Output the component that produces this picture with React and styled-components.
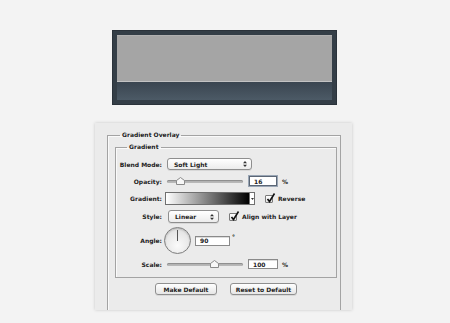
import React from "react";
import styled, { createGlobalStyle } from "styled-components";

const GlobalStyle = createGlobalStyle`
  body {
    margin: 0;
    background: #f3f3f3;
    font-family: "DejaVu Sans", sans-serif;
  }
`;

const Page = styled.div`
  padding-top: 30px;
  height: 323px;
  box-sizing: border-box;
`;

const Preview = styled.div`
  margin-left: 112px;
  width: 225px;
  height: 75px;
  box-sizing: border-box;
  padding: 5px 5px 5px 5px;
  background: #343e47;
  box-shadow: inset 0 0 0 1px #2a323a;
  display: flex;
  flex-direction: column;
`;

const Screen = styled.div`
  height: 47px;
  background: #a5a5a5;
  border-top: 1px solid #b0b0b0;
  border-bottom: 1px solid #c3c3c3;
  box-sizing: border-box;
`;

const Band = styled.div`
  flex: 1;
  background: linear-gradient(#3a4550, #4c5a66);
`;

const Panel = styled.div`
  margin: 18px 0 0 95px;
  width: 257px;
  height: 187px;
  box-sizing: border-box;
  padding: 7px 11px 0 12px;
  background: #ebebeb;
  box-shadow: 0 0 3px rgba(0, 0, 0, 0.18);
  overflow: hidden;
`;

const Group = styled.fieldset`
  margin: 0;
  padding: ${(p) => p.$p || "0"};
  border: 1px solid #a3a3a3;
  border-bottom: ${(p) => (p.$open ? "none" : "1px solid #a3a3a3")};
  box-shadow: 1px 1px 0 #fafafa inset;
  min-width: 0;
  ${(p) => p.$open && "height: 200px;"}
`;

const Legend = styled.legend`
  margin-left: ${(p) => p.$ml || 10}px;
  padding: 0 2px;
  font-size: 6px;
  line-height: 10px;
  font-weight: bold;
  color: #1a1a1a;
`;

const Rows = styled.div`
  display: flex;
  flex-direction: column;
`;

const Row = styled.div`
  display: flex;
  align-items: center;
  height: ${(p) => p.$h}px;
  margin-top: ${(p) => p.$mt || 0}px;
`;

const Label = styled.span`
  width: 46px;
  margin-right: ${(p) => p.$gap ?? 4}px;
  text-align: right;
  font-size: 6px;
  font-weight: bold;
  color: #222;
  flex-shrink: 0;
`;

const Text = styled.span`
  font-size: 6px;
  font-weight: bold;
  color: #222;
  margin-left: ${(p) => p.$ml || 0}px;
  align-self: ${(p) => (p.$top ? "flex-start" : "center")};
  margin-top: ${(p) => p.$top || 0}px;
`;

const Select = styled.div`
  width: ${(p) => p.$w}px;
  height: ${(p) => p.$h}px;
  margin-left: ${(p) => p.$ml || 0}px;
  box-sizing: border-box;
  border: 1px solid #8e8e8e;
  border-radius: 3px;
  background: linear-gradient(#ffffff, #ececec);
  box-shadow: 0 1px 0 rgba(0, 0, 0, 0.08);
  display: flex;
  align-items: center;
  justify-content: space-between;
  padding: 0 4px 0 6px;
  font-size: 6px;
  font-weight: bold;
  color: #222;
`;

const Slider = styled.div`
  position: relative;
  width: 76px;
  height: 3px;
  margin-left: ${(p) => p.$ml || 0}px;
  border-radius: 2px;
  background: #b8b8b8;
  box-shadow: inset 0 1px 1px rgba(0, 0, 0, 0.25);
`;

const Thumb = styled.svg`
  position: absolute;
  top: -3px;
`;

const Field = styled.div`
  width: ${(p) => p.$w}px;
  height: ${(p) => p.$h}px;
  margin-left: ${(p) => p.$ml || 0}px;
  box-sizing: border-box;
  background: #fff;
  border: 1px solid ${(p) => (p.$focus ? "#5b6675" : "#8a8a8a")};
  box-shadow: ${(p) => (p.$focus ? "0 0 0 1px #9aa6b5" : "inset 0 1px 0 #ddd")};
  font-size: 6px;
  font-weight: bold;
  color: #222;
  display: flex;
  align-items: center;
  padding-left: 4px;
`;

const GradientBar = styled.div`
  display: flex;
  height: 13px;
  border: 1px solid #6f6f6f;
  box-sizing: border-box;
`;

const Ramp = styled.div`
  width: 83px;
  background: linear-gradient(to right, #ffffff, #000000);
`;

const DropTab = styled.div`
  width: 4px;
  background: #fff;
  border-left: 1px solid #6f6f6f;
  display: flex;
  align-items: center;
  justify-content: center;
`;

const Check = styled.div`
  position: relative;
  width: 8px;
  height: 8px;
  margin-left: ${(p) => p.$ml}px;
  box-sizing: border-box;
  border: 1px solid #7a7a7a;
  border-radius: 1px;
  background: linear-gradient(#fff, #e4e4e4);
`;

const Tick = styled.svg`
  position: absolute;
  left: 0;
  top: -3px;
`;

const Dial = styled.div`
  position: relative;
  width: 27px;
  height: 27px;
  margin-left: -2px;
  box-sizing: border-box;
  border-radius: 50%;
  border: 1px solid #7e7e7e;
  background: radial-gradient(circle at 50% 70%, #fafafa, #dadada);
  box-shadow: inset 0 1px 2px rgba(0, 0, 0, 0.2);
`;

const Needle = styled.div`
  position: absolute;
  left: 12px;
  top: 2px;
  width: 1px;
  height: 11px;
  background: #555;
`;

const Buttons = styled.div`
  display: flex;
  justify-content: center;
  gap: 13px;
  margin-top: 5px;
`;

const Button = styled.div`
  width: ${(p) => p.$w}px;
  height: 12px;
  box-sizing: border-box;
  border: 1px solid #8f8f8f;
  border-radius: 3px;
  background: linear-gradient(#ffffff, #e6e6e6);
  box-shadow: 0 1px 0 rgba(0, 0, 0, 0.08);
  font-size: 6px;
  font-weight: bold;
  color: #222;
  display: flex;
  align-items: center;
  justify-content: center;
`;

const Arrows = () => (
  <svg width="4" height="6" viewBox="0 0 4 6">
    <path d="M0 2.3 L2 0 L4 2.3 Z M0 3.7 L2 6 L4 3.7 Z" fill="#333" />
  </svg>
);

const ThumbShape = ({ left }) => (
  <Thumb width="9" height="8" viewBox="0 0 9 8" style={{ left }}>
    <path
      d="M4.5 0.5 L8.5 3.5 L8.5 7.5 L0.5 7.5 L0.5 3.5 Z"
      fill="#f7f7f7"
      stroke="#8a8a8a"
      strokeWidth="1"
    />
  </Thumb>
);

const CheckBox = ({ ml }) => (
  <Check $ml={ml}>
    <Tick width="10" height="10" viewBox="0 0 10 10">
      <path
        d="M1.5 6 L3.5 8.5 L8.5 0.5"
        fill="none"
        stroke="#111"
        strokeWidth="1.6"
      />
    </Tick>
  </Check>
);

export default function App() {
  return (
    <Page>
      <GlobalStyle />
      <Preview>
        <Screen />
        <Band />
      </Preview>
      <Panel>
        <Group $open $p="2px 3px 0 7px">
          <Legend $ml={5}>Gradient Overlay</Legend>
          <Group $p="0 0 8px 0">
            <Legend $ml={11}>Gradient</Legend>
            <Rows>
              <Row $h={12} $mt={6}>
                <Label>Blend Mode:</Label>
                <Select $w={85} $h={12} $ml={1}>
                  Soft Light
                  <Arrows />
                </Select>
              </Row>
              <Row $h={10} $mt={6}>
                <Label>Opacity:</Label>
                <Slider $ml={1}>
                  <ThumbShape left={9} />
                </Slider>
                <Field $w={28} $h={10} $ml={6} $focus>
                  16
                </Field>
                <Text $ml={5}>%</Text>
              </Row>
              <Row $h={13} $mt={6}>
                <Label $gap={3}>Gradient:</Label>
                <GradientBar>
                  <Ramp />
                  <DropTab>
                    <svg width="3" height="2" viewBox="0 0 3 2">
                      <path d="M0 0 L3 0 L1.5 2 Z" fill="#333" />
                    </svg>
                  </DropTab>
                </GradientBar>
                <CheckBox ml={10} />
                <Text $ml={5}>Reverse</Text>
              </Row>
              <Row $h={13} $mt={5}>
                <Label>Style:</Label>
                <Select $w={51} $h={13} $ml={2}>
                  Linear
                  <Arrows />
                </Select>
                <CheckBox ml={10} />
                <Text $ml={5}>Align with Layer</Text>
              </Row>
              <Row $h={27} $mt={4}>
                <Label>Angle:</Label>
                <Dial>
                  <Needle />
                </Dial>
                <Field $w={35} $h={10} $ml={4}>
                  90
                </Field>
                <Text $ml={2} $top={6}>
                  °
                </Text>
              </Row>
              <Row $h={10} $mt={5}>
                <Label>Scale:</Label>
                <Slider $ml={1}>
                  <ThumbShape left={43} />
                </Slider>
                <Field $w={30} $h={10} $ml={5}>
                  100
                </Field>
                <Text $ml={4}>%</Text>
              </Row>
            </Rows>
          </Group>
          <Buttons>
            <Button $w={62}>Make Default</Button>
            <Button $w={67}>Reset to Default</Button>
          </Buttons>
        </Group>
      </Panel>
    </Page>
  );
}
